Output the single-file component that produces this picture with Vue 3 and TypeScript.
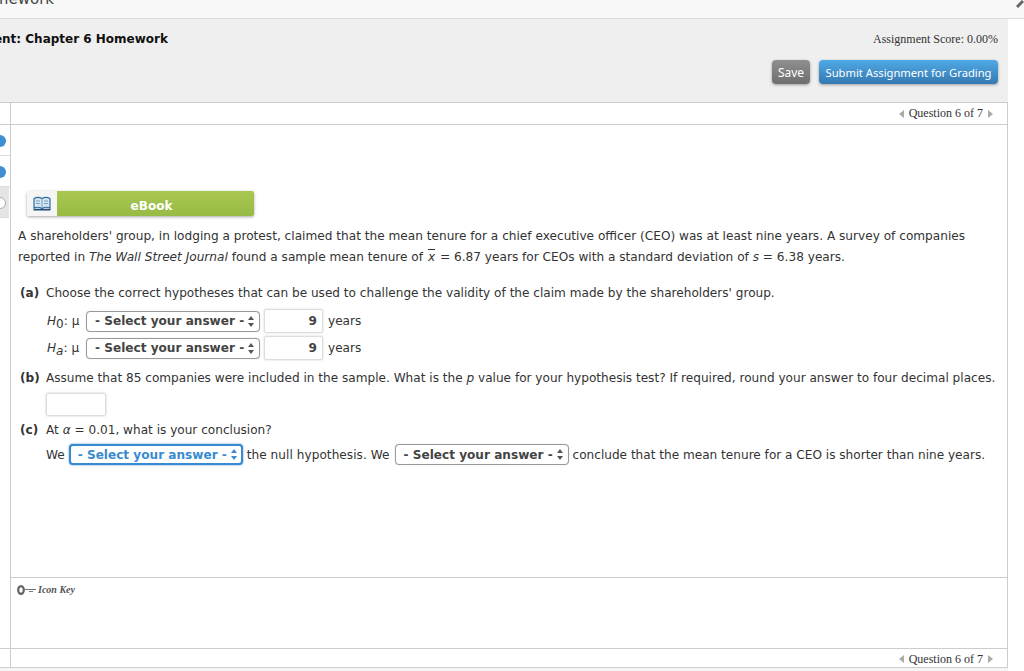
<script setup lang="ts">
const steps = [
  { cls: 'done' },
  { cls: 'done' },
  { cls: 'current' },
]
</script>

<template>
  <div class="page">
    <div class="topbar"><span class="toptitle">Homework</span></div>
    <svg class="corner" width="8" height="8" viewBox="0 0 8 8"><path d="M1 7 L7 1" stroke="#666" stroke-width="3" /></svg>
    <div class="content">
      <header class="head">
        <div class="head-top">
          <div class="assign"><b>Assignment: Chapter 6 Homework</b></div>
          <div class="score">Assignment Score: 0.00%</div>
        </div>
        <div class="actions">
          <button class="btn save">Save</button>
          <button class="btn submit">Submit Assignment for Grading</button>
        </div>
      </header>
      <div class="body">
        <aside class="side">
          <div class="side-top"></div>
          <div v-for="(s, i) in steps" :key="i" class="step" :class="s.cls"><i class="dot"></i></div>
          <div class="side-bottom"></div>
        </aside>
        <main class="main">
          <div class="qnav">
            <span class="tri left"></span><span>Question 6 of 7</span><span class="tri right"></span>
          </div>
          <section class="question">
            <div class="ebook">
              <span class="ebook-icon">
                <svg width="18" height="15" viewBox="0 0 18 15">
                  <path d="M1 2.5 C3.5 1 6.5 1 9 2.5 C11.5 1 14.5 1 17 2.5 V12 C14.5 11 11.5 11 9 12.5 C6.5 11 3.5 11 1 12 Z" fill="#d5e4f1" stroke="#2f6a9c" stroke-width="1.2" />
                  <path d="M9 2.5 V12.5 M3 5 H7 M3 7.5 H7 M11 5 H15 M11 7.5 H15" stroke="#5d8fb8" stroke-width=".8" fill="none" />
                  <path d="M0.5 13.6 H17.5" stroke="#1f4d78" stroke-width="1.8" />
                </svg>
              </span>
              <span class="ebook-label">eBook</span>
            </div>
            <p class="intro">A shareholders' group, in lodging a protest, claimed that the mean tenure for a chief executive officer (CEO) was at least nine years. A survey of companies reported in <em>The Wall Street Journal</em> found a sample mean tenure of <em class="xbar">x</em> = 6.87 years for CEOs with a standard deviation of <em>s</em> = 6.38 years.</p>
            <p class="part a"><b>(a)</b>Choose the correct hypotheses that can be used to challenge the validity of the claim made by the shareholders' group.</p>
            <div class="hyp">
              <span class="hlabel"><em>H</em><sub>0</sub>: μ</span>
              <span class="sel">- Select your answer -<span class="arrows"></span></span>
              <span class="num">9</span>
              <span>years</span>
            </div>
            <div class="hyp second">
              <span class="hlabel"><em>H</em><sub><em>a</em></sub>: μ</span>
              <span class="sel">- Select your answer -<span class="arrows"></span></span>
              <span class="num">9</span>
              <span>years</span>
            </div>
            <p class="part b"><b>(b)</b>Assume that 85 companies were included in the sample. What is the <em>p</em> value for your hypothesis test? If required, round your answer to four decimal places.</p>
            <div class="empty"></div>
            <p class="part c"><b>(c)</b>At <em>α</em> = 0.01, what is your conclusion?</p>
            <div class="concl">
              <span>We</span>
              <span class="sel focus">- Select your answer -<span class="arrows"></span></span>
              <span class="mid">the null hypothesis. We</span>
              <span class="sel">- Select your answer -<span class="arrows"></span></span>
              <span>conclude that the mean tenure for a CEO is shorter than nine years.</span>
            </div>
          </section>
          <div class="iconkey">
            <svg width="20" height="12" viewBox="0 0 20 12">
              <ellipse cx="4" cy="6" rx="2.8" ry="3.9" fill="none" stroke="#666" stroke-width="2.2" />
              <path d="M7 5.5 H19 M12 7.5 H16" stroke="#777" stroke-width="1.1" />
            </svg>
            <em>Icon Key</em>
          </div>
          <div class="qnav bottom">
            <span class="tri left"></span><span>Question 6 of 7</span><span class="tri right"></span>
          </div>
        </main>
      </div>
    </div>
  </div>
</template>

<style>
html, body { margin: 0; background: #fff; }
</style>

<style scoped>
.page {
  position: relative;
  width: 1024px;
  height: 671px;
  overflow: hidden;
  font-family: "DejaVu Sans", Verdana, sans-serif;
  font-size: 12.1px;
  color: #333;
  background: #fff;
}
.topbar {
  height: 18px;
  background: #f8f8f8;
  border-bottom: 1px solid #dcdcdc;
  position: relative;
  overflow: hidden;
}
.toptitle {
  position: absolute;
  right: 970px;
  bottom: 10px;
  font-size: 15px;
  line-height: 18px;
  color: #444;
  white-space: nowrap;
}
.corner { position: absolute; right: 0; top: 0; }
.content { width: 1008px; background: #f5f5f5; height: 652px; }
.head {
  height: 83px;
  background: #efefef;
  border-bottom: 1px solid #ccc;
}
.head-top {
  display: flex;
  justify-content: space-between;
  padding-top: 12px;
  height: 28px;
}
.assign {
  width: 168px;
  display: flex;
  justify-content: flex-end;
  overflow: hidden;
  white-space: nowrap;
  font-size: 12px;
  line-height: 17px;
  color: #111;
}
.score {
  font-family: "Liberation Serif", "Times New Roman", serif;
  font-size: 12px;
  line-height: 17px;
  color: #333;
  padding-right: 10px;
}
.actions {
  display: flex;
  justify-content: flex-end;
  gap: 9px;
  padding-top: 1px;
  padding-right: 10px;
}
.btn {
  height: 24px;
  border: 0;
  border-radius: 4px;
  color: #fff;
  font-family: "Noto Sans", "Open Sans", sans-serif;
  padding: 0;
  white-space: nowrap;
  box-shadow: 0 1px 3px rgba(0, 0, 0, .35);
}
.save { width: 38px; font-size: 12px; background: linear-gradient(#8f8f8f, #6e6e6e); }
.submit { width: 179px; font-size: 11.2px; background: linear-gradient(#4fa9e6, #3579b2); }
.body {
  display: flex;
  height: 564px;
  background: #fff;
  border-bottom: 1px solid #ccc;
}
.side {
  width: 10px;
  flex: none;
  border-right: 1px solid #ccc;
  display: flex;
  flex-direction: column;
}
.side-top { height: 21px; border-bottom: 1px solid #ccc; flex: none; }
.side-bottom { margin-top: auto; height: 18px; border-top: 1px solid #ccc; flex: none; }
.step {
  border-bottom: 1px solid #ddd;
  display: flex;
  align-items: center;
  padding-top: 2px;
  box-sizing: border-box;
  height: 31px;
  flex: none;
}
.step.current { background: #e4e4e4; margin-right: 1px; padding-top: 1px; }
.dot {
  width: 12px;
  height: 12px;
  margin-left: -6px;
  border-radius: 50%;
  box-sizing: border-box;
  flex: none;
}
.done .dot { background: #3d8fd1; }
.current .dot { background: #fff; border: 1px solid #aaa; }
.main {
  flex: 1;
  min-width: 0;
  border-right: 1px solid #ccc;
  display: flex;
  flex-direction: column;
}
.qnav {
  height: 21px;
  flex: none;
  border-bottom: 1px solid #ccc;
  display: flex;
  align-items: center;
  justify-content: flex-end;
  gap: 5px;
  padding-right: 14px;
  font-family: "Liberation Serif", "Times New Roman", serif;
  font-size: 12px;
  color: #333;
}
.tri { width: 0; height: 0; border-top: 4px solid transparent; border-bottom: 4px solid transparent; }
.tri.left { border-right: 5px solid #aaa; }
.tri.right { border-left: 5px solid #aaa; }
.question { flex: 1; padding: 66px 0 0 7px; min-height: 0; }
.ebook {
  display: flex;
  width: 227px;
  height: 25px;
  margin-left: 9px;
  border-radius: 2px;
  box-shadow: 0 1px 3px rgba(0, 0, 0, .35);
  overflow: hidden;
}
.ebook-icon {
  width: 30px;
  background: #f5f5f5;
  display: flex;
  align-items: center;
  justify-content: center;
}
.ebook-label {
  flex: 1;
  background: linear-gradient(#a8c752, #98bb45);
  color: #fff;
  font-weight: bold;
  font-size: 12px;
  line-height: 30px;
  text-align: center;
  padding-right: 8px;
}
.intro { margin: 10px 0 0; line-height: 21px; width: 975px; font-size: 12.13px; }
.xbar { text-decoration: overline; padding: 0 1px; }
.part { margin: 0; line-height: 18px; padding-left: 2px; white-space: nowrap; }
.part b { display: inline-block; width: 26px; }
.part.a { margin-top: 16px; }
.part.b { margin-top: 9px; }
.part.c { margin-top: 5px; }
.hyp {
  display: flex;
  align-items: center;
  height: 24px;
  margin-top: 7px;
  padding-left: 29px;
}
.hyp.second { margin-top: 3px; }
.hlabel { width: 39px; flex: none; white-space: nowrap; }
.hlabel sub { font-size: 12px; line-height: 0; vertical-align: -3px; }
.sel {
  display: flex;
  align-items: center;
  justify-content: space-between;
  width: 174px;
  height: 21px;
  box-sizing: border-box;
  border: 1px solid #999;
  border-radius: 4px;
  padding: 0 4px 0 8px;
  font-weight: bold;
  color: #444;
  background: #fff;
  white-space: nowrap;
  flex: none;
  box-shadow: 0 0 1px rgba(0,0,0,.25);
}
.arrows {
  position: relative;
  width: 7px;
  height: 11px;
  flex: none;
}
.arrows::before, .arrows::after {
  content: "";
  position: absolute;
  left: 0;
  border-left: 3.5px solid transparent;
  border-right: 3.5px solid transparent;
}
.arrows::before { top: 0; border-bottom: 4px solid #555; }
.arrows::after { bottom: 0; border-top: 4px solid #555; }
.num {
  width: 59px;
  height: 24px;
  box-sizing: border-box;
  margin: 0 5px 0 4px;
  border: 1px solid #ddd;
  border-radius: 2px;
  box-shadow: 0 0 2px rgba(0,0,0,.2);
  font-weight: bold;
  color: #444;
  text-align: right;
  padding-right: 5px;
  line-height: 22px;
  flex: none;
}
.empty {
  width: 60px;
  height: 23px;
  box-sizing: border-box;
  margin: 6px 0 0 28px;
  border: 1px solid #ddd;
  border-radius: 2px;
  box-shadow: 0 0 2px rgba(0,0,0,.25);
}
.concl {
  display: flex;
  align-items: center;
  gap: 4px;
  margin-top: 5px;
  padding-left: 28px;
  white-space: nowrap;
}
.mid { letter-spacing: .05px; margin-right: 1px; }
.sel.focus {
  color: #3a8ad0;
  border: 2px solid #3a8ad0;
  box-shadow: 0 0 2px #3a8ad0;
  padding: 0 3px 0 7px;
}
.focus .arrows::before { border-bottom-color: #3a8ad0; }
.focus .arrows::after { border-top-color: #3a8ad0; }
.iconkey {
  height: 71px;
  flex: none;
  box-sizing: border-box;
  border-top: 1px solid #ccc;
  padding: 5px 0 0 6px;
  display: flex;
  align-items: flex-start;
  gap: 1px;
  font-family: "Liberation Serif", "Times New Roman", serif;
  font-size: 10px;
  font-weight: bold;
  color: #555;
  line-height: 13px;
}
.iconkey svg { margin-top: 1px; }
.qnav.bottom {
  height: 19px;
  box-sizing: border-box;
  border-top: 1px solid #ccc;
  border-bottom: 0;
  padding-top: 2px;
}
</style>
